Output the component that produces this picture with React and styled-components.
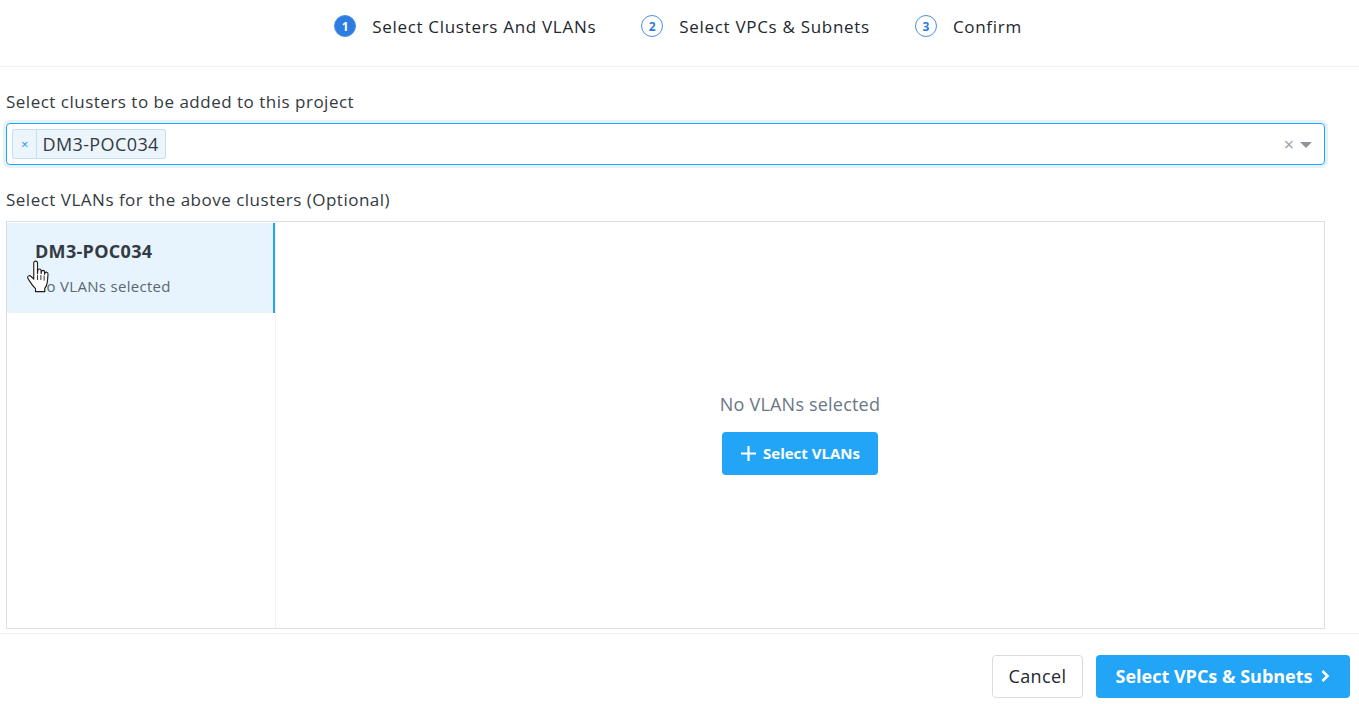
import React from "react";
import styled, { createGlobalStyle } from "styled-components";

const GlobalStyle = createGlobalStyle`
  html, body {
    margin: 0;
    padding: 0;
    background: #ffffff;
    font-family: "Open Sans", "Lato", sans-serif;
    color: #333a41;
  }
`;

const Page = styled.div`
  width: 1359px;
  height: 704px;
  display: flex;
  flex-direction: column;
  overflow: hidden;
`;

const Steps = styled.div`
  height: 67px;
  border-bottom: 1px solid #f0f1f2;
  display: flex;
  justify-content: center;
  align-items: center;
  gap: 45px;
  padding-right: 3px;
  padding-bottom: 14px;
  box-sizing: border-box;
`;

const Step = styled.div`
  display: flex;
  align-items: center;
  gap: 16px;
  font-size: 17px;
  letter-spacing: 0.7px;
  color: #22272e;
`;

const StepNum = styled.span`
  width: 22px;
  height: 22px;
  border-radius: 50%;
  box-sizing: border-box;
  display: flex;
  align-items: center;
  justify-content: center;
  font-size: 12px;
  font-weight: 700;
  letter-spacing: 0;
  background: ${(p) => (p.$active ? "#2d7de0" : "#ffffff")};
  color: ${(p) => (p.$active ? "#ffffff" : "#2d7de0")};
  border: 1.5px solid #4a90e8;
`;

const Body = styled.div`
  flex: 1;
  padding: 24px 34px 0 6px;
  display: flex;
  flex-direction: column;
`;

const Label = styled.div`
  font-size: 17px;
  line-height: 22px;
  letter-spacing: 0.5px;
  color: #333a41;
  margin-bottom: 10px;
`;

const SelectBox = styled.div`
  height: 42px;
  box-sizing: border-box;
  border: 1px solid #22a5f7;
  border-radius: 4px;
  box-shadow: 0 0 0 3px #e4f2fd;
  display: flex;
  align-items: center;
  padding: 0 12px 0 5px;
  margin-bottom: 24px;
`;

const Tag = styled.div`
  height: 30px;
  box-sizing: border-box;
  display: flex;
  align-items: center;
  background: #edf5fc;
  border: 1px solid #c9def0;
  border-radius: 2px;
`;

const TagRemove = styled.span`
  color: #2d8fe6;
  font-size: 13px;
  padding: 0 8px 0 8px;
  border-right: 1px solid #c9def0;
  height: 100%;
  display: flex;
  align-items: center;
`;

const TagText = styled.span`
  font-size: 18px;
  letter-spacing: 0.4px;
  color: #333a41;
  padding: 0 6px 0 5px;
`;

const Spacer = styled.div`
  flex: 1;
`;

const Clear = styled.span`
  color: #9aa0a6;
  font-size: 18px;
  margin-right: 6px;
`;

const Caret = styled.span`
  width: 0;
  height: 0;
  border-left: 6px solid transparent;
  border-right: 6px solid transparent;
  border-top: 6px solid #8f959b;
  margin-top: 2px;
`;

const Panel = styled.div`
  height: 406px;
  border: 1px solid #dcdee0;
  display: flex;
`;

const ClusterList = styled.div`
  width: 269px;
  border-right: 1px solid #eef0f1;
  box-sizing: border-box;
  padding-top: 1px;
`;

const ClusterItem = styled.div`
  position: relative;
  height: 90px;
  box-sizing: border-box;
  padding: 16px 0 0 28px;
  background: ${(p) => (p.$selected ? "#e7f4fd" : "transparent")};
  border-right: 2px solid ${(p) => (p.$selected ? "#22a5f7" : "transparent")};
`;

const ClusterName = styled.div`
  font-size: 18px;
  line-height: 25px;
  letter-spacing: 0.3px;
  font-weight: 700;
  color: #333a41;
  margin-bottom: 12px;
`;

const ClusterSub = styled.div`
  font-size: 15px;
  line-height: 20px;
  letter-spacing: 0.3px;
  color: #5c6670;
`;

const Cursor = styled.svg`
  position: absolute;
  left: 18px;
  top: 37px;
`;

const Detail = styled.div`
  flex: 1;
  display: flex;
  flex-direction: column;
  align-items: center;
  justify-content: center;
  padding-top: 16px;
`;

const Empty = styled.div`
  font-size: 18px;
  line-height: 24px;
  letter-spacing: 0.2px;
  color: #6a7785;
  margin-bottom: 16px;
`;

const PrimaryButton = styled.button`
  background: #22a5f7;
  color: #ffffff;
  border: none;
  border-radius: 4px;
  font-family: inherit;
  font-weight: 700;
  font-size: ${(p) => p.$size || "15px"};
  height: ${(p) => p.$height || "43px"};
  width: ${(p) => p.$width};
  display: flex;
  align-items: center;
  justify-content: center;
  gap: 6px;
  cursor: pointer;
`;

const Footer = styled.div`
  margin-top: 3px;
  border-top: 1px solid #f0f1f2;
  height: 71px;
  box-sizing: border-box;
  display: flex;
  justify-content: flex-end;
  align-items: center;
  gap: 13px;
  padding: 14px 9px 0 0;
`;

const Button = styled.button`
  height: 43px;
  width: 91px;
  background: #ffffff;
  border: 1px solid #d9dcdf;
  border-radius: 4px;
  font-family: inherit;
  font-size: 18px;
  letter-spacing: 0.4px;
  color: #22272e;
`;

const HandCursor = () => (
  <Cursor width="30" height="35" viewBox="0 0 24 28">
    <path
      d="M7 2.5c0-1 .7-1.6 1.5-1.6S10 1.5 10 2.5V11l.2-2.4c.1-.9.7-1.4 1.4-1.4s1.3.6 1.3 1.5v2l.3-1.3c.2-.8.8-1.2 1.4-1.1.7.1 1.2.7 1.1 1.6l-.1 1.5.4-.9c.3-.6.9-.9 1.5-.7.7.2 1 .9.9 1.7l-.5 5.8c-.2 2.3-.9 4-2.1 5.4v2.6H8.4v-2.4c-1.4-1.3-2.9-3.2-4.3-5.4l-1.7-2.7c-.5-.8-.3-1.7.4-2.1.7-.4 1.5-.2 2.1.5L7 15.3Z"
      fill="#ffffff"
      stroke="#1c1c1c"
      strokeWidth="0.9"
      strokeLinejoin="round"
    />
    <path d="M10 12v4M12.7 12v4M15.3 12.5v4" stroke="#1c1c1c" strokeWidth="0.7" />
  </Cursor>
);

const App = () => {
  return (
    <Page>
      <GlobalStyle />
      <Steps>
        <Step>
          <StepNum $active>1</StepNum>
          Select Clusters And VLANs
        </Step>
        <Step>
          <StepNum>2</StepNum>
          Select VPCs &amp; Subnets
        </Step>
        <Step>
          <StepNum>3</StepNum>
          Confirm
        </Step>
      </Steps>
      <Body>
        <Label>Select clusters to be added to this project</Label>
        <SelectBox>
          <Tag>
            <TagRemove>×</TagRemove>
            <TagText>DM3-POC034</TagText>
          </Tag>
          <Spacer />
          <Clear>×</Clear>
          <Caret />
        </SelectBox>
        <Label>Select VLANs for the above clusters (Optional)</Label>
        <Panel>
          <ClusterList>
            <ClusterItem $selected>
              <ClusterName>DM3-POC034</ClusterName>
              <ClusterSub>No VLANs selected</ClusterSub>
              <HandCursor />
            </ClusterItem>
          </ClusterList>
          <Detail>
            <Empty>No VLANs selected</Empty>
            <PrimaryButton $width="156px">
              <svg width="17" height="17" viewBox="0 0 17 17">
                <path d="M8.5 1v15M1 8.5h15" stroke="#fff" strokeWidth="2.2" />
              </svg>
              Select VLANs
            </PrimaryButton>
          </Detail>
        </Panel>
      </Body>
      <Footer>
        <Button>Cancel</Button>
        <PrimaryButton $width="254px" $height="43px" $size="18px">
          Select VPCs &amp; Subnets
          <svg width="12" height="14" viewBox="0 0 12 14">
            <path d="M3.5 2l5 5-5 5" stroke="#fff" strokeWidth="2.6" fill="none" />
          </svg>
        </PrimaryButton>
      </Footer>
    </Page>
  );
};

export default App;
